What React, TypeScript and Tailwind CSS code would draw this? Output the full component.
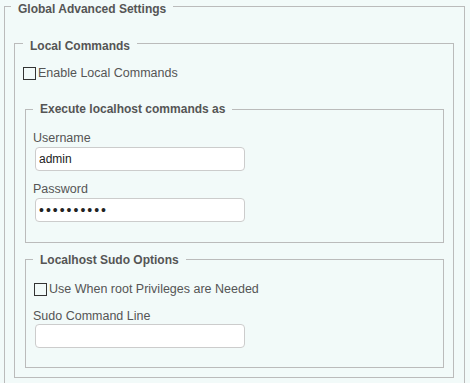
import { useState } from "react";

const legendCls = "px-[7px] text-[12px] font-bold text-[#555555]";
const labelCls = "block text-[12.5px] leading-[14px] text-[#555555]";
const inputCls =
  "ml-[2px] block h-[24px] w-[210px] rounded-[4px] border border-[#cccccc] bg-white px-[3px] text-[12px] text-[#222222] outline-none";

function Checkbox({
  checked,
  onChange,
  label,
}: {
  checked: boolean;
  onChange: (v: boolean) => void;
  label: string;
}) {
  return (
    <label className="flex cursor-pointer items-center gap-[2px] text-[12.5px] leading-[13px] text-[#555555]">
      <input
        type="checkbox"
        checked={checked}
        onChange={(e) => onChange(e.target.checked)}
        className="sr-only"
      />
      <span className="flex h-[13px] w-[13px] shrink-0 items-center justify-center border border-[#333333]">
        {checked && <span className="h-[7px] w-[7px] bg-[#333333]" />}
      </span>
      <span className="pt-[1px]">{label}</span>
    </label>
  );
}

export default function App() {
  const [enableLocal, setEnableLocal] = useState(false);
  const [useSudo, setUseSudo] = useState(false);
  const [username, setUsername] = useState("admin");
  const [password, setPassword] = useState("adminadmin");
  const [sudoLine, setSudoLine] = useState("");

  return (
    <div
      className="h-[383px] w-[470px] overflow-hidden bg-[#f2faf9]"
      style={{ fontFamily: '"Liberation Sans", Arial, sans-serif' }}
    >
      {/* Global Advanced Settings */}
      <fieldset className="ml-[4px] mt-[-3px] w-[461px] border border-[#bbbbbb] pb-[20px]">
        <legend className={`${legendCls} ml-[6px] pt-[5px] leading-[14px]`}>
          Global Advanced Settings
        </legend>

        {/* Local Commands */}
        <fieldset className="ml-[9px] mr-[10px] mt-[18px] border border-[#bbbbbb] pb-[9px]">
          <legend className={`${legendCls} ml-[8px] pt-[5px] leading-[14px]`}>
            Local Commands
          </legend>

          <div className="pl-[8px] pt-[13px]">
            <Checkbox
              checked={enableLocal}
              onChange={setEnableLocal}
              label="Enable Local Commands"
            />
          </div>

          {/* Execute localhost commands as */}
          <fieldset className="ml-[10px] mr-[9px] mt-[23px] border border-[#bbbbbb] pb-[20px]">
            <legend className={`${legendCls} ml-[7px] leading-[13px]`}>
              Execute localhost commands as
            </legend>
            <div className="pl-[7px] pt-[15px]">
              <label className={labelCls}>Username</label>
              <input
                className={`${inputCls} mt-[2px]`}
                value={username}
                onChange={(e) => setUsername(e.target.value)}
              />
              <label className={`${labelCls} mt-[11px]`}>Password</label>
              <input
                type="password"
                className={`${inputCls} mt-[2px] text-[14px] tracking-[2px]`}
                value={password}
                onChange={(e) => setPassword(e.target.value)}
              />
            </div>
          </fieldset>

          {/* Localhost Sudo Options */}
          <fieldset className="ml-[10px] mr-[9px] mt-[9px] border border-[#bbbbbb] pb-[19px]">
            <legend className={`${legendCls} ml-[7px] pt-[1px] leading-[14px]`}>
              Localhost Sudo Options
            </legend>
            <div className="pl-[7px] pt-[15px]">
              <div className="pl-[1px]">
                <Checkbox
                  checked={useSudo}
                  onChange={setUseSudo}
                  label="Use When root Privileges are Needed"
                />
              </div>
              <label className={`${labelCls} mt-[13px]`}>Sudo Command Line</label>
              <input
                className={`${inputCls} mt-[1px]`}
                value={sudoLine}
                onChange={(e) => setSudoLine(e.target.value)}
              />
            </div>
          </fieldset>
        </fieldset>
      </fieldset>
    </div>
  );
}
